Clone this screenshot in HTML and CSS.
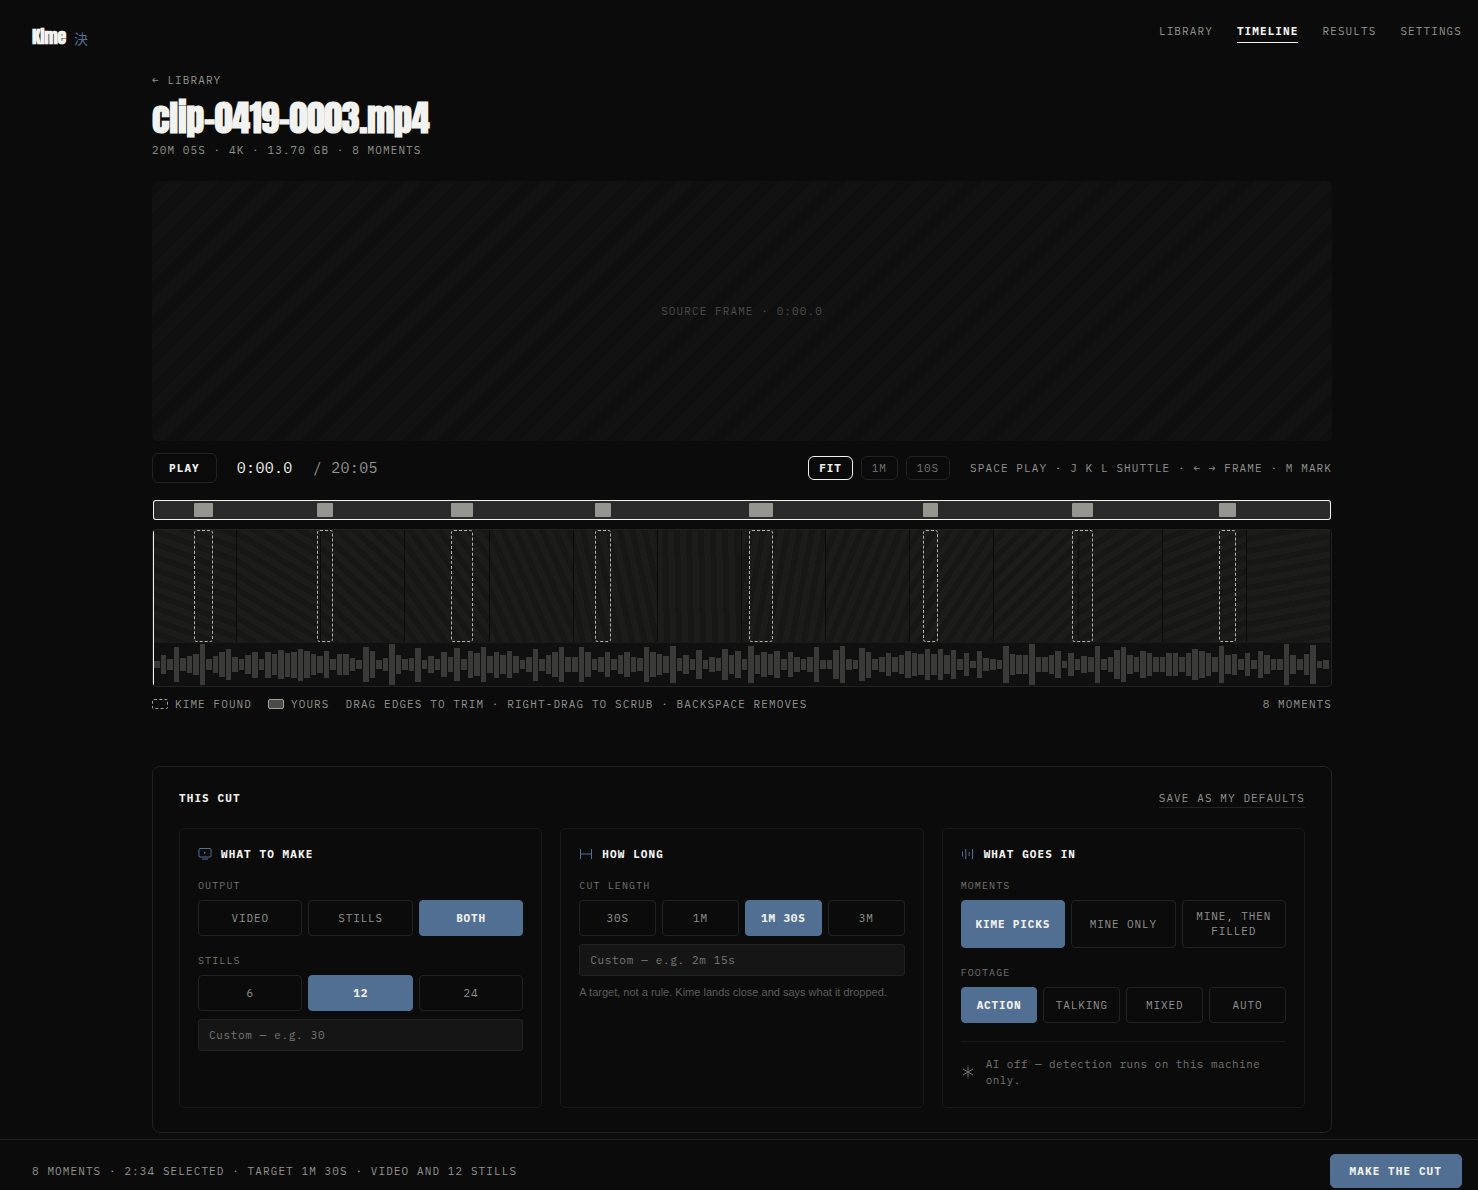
FILE: index.html
```html
<!DOCTYPE html>
<html lang="en">
    <head>
        <meta charset="utf-8" />
        <meta name="viewport" content="width=device-width, initial-scale=1" />
        <title>Kime - Timeline</title>
        <link rel="stylesheet" href="styles.css">
        <script src="timeline.js" defer></script>
    </head>

    <body>
        <header class="topbar">
            <a class="brand" href="#">Kime <span class="brand-mark" lang="ja">決</span></a>
            <nav>
                <a href="#">Library</a>
                <a href="#" class="current" aria-current="page">Timeline</a>
                <a href="#">Results</a>
                <a href="#">Settings</a>
            </nav>
        </header>

        <main>
            <a class="back" href="#">← Library</a>
            <h1>clip-0419-0003.mp4</h1>
            <p class="meta">20m 05s · 4K · 13.70 GB · 8 moments</p>

            <div class="frame">Source frame · 0:00.0</div>

            <div class="transport">
                <button class="play">Play</button>
                <span class="time">0:00.0</span>
                <span class="duration">/ 20:05</span>
                <div class="zoom">
                    <button aria-pressed="true">Fit</button>
                    <button aria-pressed="false">1m</button>
                    <button aria-pressed="false">10s</button>
                </div>
                <span class="keys">Space play · J K L shuttle · ← → frame · M mark</span>
            </div>

            <div class="overview" id="overview"></div>

            <div class="timeline">
                <div class="film" id="film"></div>
                <div class="wave" id="wave"></div>
                <div class="playhead"></div>
            </div>

            <div class="legend">
                <span class="key"><i class="swatch found"></i>Kime found</span>
                <span class="key"><i class="swatch yours"></i>Yours</span>
                <span>Drag edges to trim · Right-drag to scrub · Backspace removes</span>
                <span class="count">8 moments</span>
            </div>

            <section class="panel">
                <div class="panel-head">
                    <h2>This cut</h2>
                    <button class="save">Save as my defaults</button>
                </div>

                <div class="cards">
                    <div class="card">
                        <h3>
                            <svg class="icon" viewBox="0 0 14 14"><rect x="1" y="1.5" width="12" height="8.5" rx="1" /><path d="M4 12h6" /><path d="M6 4.5v2.4l2-1.2z" class="solid" /></svg>
                            What to make
                        </h3>
                        <div class="label" id="output">Output</div>
                        <div class="options" role="group" aria-labelledby="output">
                            <button aria-pressed="false">Video</button>
                            <button aria-pressed="false">Stills</button>
                            <button aria-pressed="true">Both</button>
                        </div>
                        <label class="label" for="stills">Stills</label>
                        <div class="options">
                            <button aria-pressed="false">6</button>
                            <button aria-pressed="true">12</button>
                            <button aria-pressed="false">24</button>
                        </div>
                        <input type="text" id="stills" placeholder="Custom — e.g. 30" />
                    </div>

                    <div class="card">
                        <h3>
                            <svg class="icon" viewBox="0 0 14 14"><path d="M1.5 2v10M12.5 2v10M1.5 7h11" /></svg>
                            How long
                        </h3>
                        <label class="label" for="length">Cut length</label>
                        <div class="options">
                            <button aria-pressed="false">30s</button>
                            <button aria-pressed="false">1m</button>
                            <button aria-pressed="true">1m 30s</button>
                            <button aria-pressed="false">3m</button>
                        </div>
                        <input type="text" id="length" placeholder="Custom — e.g. 2m 15s" />
                        <p class="hint">A target, not a rule. Kime lands close and says what it dropped.</p>
                    </div>

                    <div class="card">
                        <h3>
                            <svg class="icon" viewBox="0 0 14 14"><path d="M1.5 4.5v5M4.8 2v10M8.2 5v4M11.5 2v10" /></svg>
                            What goes in
                        </h3>
                        <div class="label" id="moments">Moments</div>
                        <div class="options" role="group" aria-labelledby="moments">
                            <button aria-pressed="true">Kime picks</button>
                            <button aria-pressed="false">Mine only</button>
                            <button aria-pressed="false">Mine, then filled</button>
                        </div>
                        <div class="label" id="footage">Footage</div>
                        <div class="options" role="group" aria-labelledby="footage">
                            <button aria-pressed="true">Action</button>
                            <button aria-pressed="false">Talking</button>
                            <button aria-pressed="false">Mixed</button>
                            <button aria-pressed="false">Auto</button>
                        </div>
                        <div class="ai">
                            <svg class="icon" viewBox="0 0 14 14"><path d="M7 1.5v11M2 4l10 6M12 4l-10 6" /></svg>
                            <p>AI off — detection runs on this machine only.</p>
                        </div>
                    </div>
                </div>
            </section>
        </main>

        <footer class="cutbar">
            <span>8 moments · 2:34 selected · Target 1m 30s · Video and 12 stills</span>
            <button class="make">Make the cut</button>
        </footer>
    </body>
</html>
```
FILE: styles.css
```css
* {
    box-sizing: border-box;
}

:root {
    --bg: #0b0b0b;
    --line: #222222;
    --line-soft: #191919;
    --text: #f2f2ef;
    --muted: #92928e;
    --dim: #727270;
    --accent: #516f92;
    --mono: 'IBM Plex Mono', 'Liberation Mono', monospace;
    --display: 'Anton', 'Liberation Sans Narrow', 'Liberation Sans', sans-serif;
}

body {
    display: flex;
    flex-direction: column;
    min-height: 100vh;
    margin: 0;
    background: var(--bg);
    color: var(--muted);
    font: 11px/16px var(--mono);
    letter-spacing: 0.1em;
    text-transform: uppercase;
}

h1,
h2,
h3,
p {
    margin: 0;
}

a {
    color: inherit;
    text-decoration: none;
}

button {
    padding: 0;
    border: 1px solid var(--line);
    background: none;
    color: var(--muted);
    font: inherit;
    letter-spacing: inherit;
    text-transform: inherit;
    cursor: pointer;
}

.topbar {
    display: flex;
    align-items: flex-start;
    justify-content: space-between;
    height: 52px;
    padding: 23px 16px 0 32px;
}

.brand {
    display: flex;
    align-items: baseline;
    gap: 8px;
    color: var(--text);
    font: bold 18px/28px var(--display);
    letter-spacing: -0.02em;
    text-transform: none;
}

.brand-mark {
    color: var(--accent);
    font: 14px/28px 'Noto Sans CJK JP', sans-serif;
}

nav {
    display: flex;
    gap: 24px;
}

nav a {
    padding-bottom: 3px;
    border-bottom: 1px solid transparent;
}

nav .current {
    border-color: var(--text);
    color: var(--text);
    font-weight: bold;
}

main {
    align-self: center;
    width: 100%;
    max-width: 1218px;
    padding: 20px 16px 6px 22px;
}

.back {
    display: block;
}

h1 {
    margin: 8px 0 2px;
    color: var(--text);
    font: bold 36px/44px var(--display);
    letter-spacing: -0.01em;
    text-transform: none;
}

.frame {
    display: flex;
    align-items: center;
    justify-content: center;
    height: 260px;
    margin-top: 23px;
    border-radius: 6px;
    background: repeating-linear-gradient(135deg, #0f0f0f 0 12px, #121212 12px 24px);
    color: #4c4c4a;
}

.transport {
    display: flex;
    align-items: center;
    margin: 12px 0 17px;
}

.play {
    height: 30px;
    padding: 0 16px;
    border-radius: 6px;
    color: var(--text);
    font-weight: bold;
}

.time,
.duration {
    margin-left: 20px;
    font-size: 15px;
    letter-spacing: 0.02em;
}

.time {
    color: var(--text);
}

.zoom {
    display: flex;
    gap: 8px;
    margin: 0 20px 0 auto;
}

.zoom button {
    height: 24px;
    padding: 0 10px;
    border-radius: 6px;
    color: var(--dim);
    letter-spacing: 0.08em;
}

.zoom button[aria-pressed='true'] {
    border-color: var(--text);
    color: var(--text);
    font-weight: bold;
}

.overview {
    position: relative;
    height: 20px;
    margin: 0 1px 9px;
    border-radius: 3px;
    background: #2a2a2a;
    box-shadow: inset 0 0 0 1px var(--text);
}

.overview .moment {
    position: absolute;
    top: 3px;
    bottom: 3px;
    border-radius: 1px;
    background: #969690;
}

.timeline {
    position: relative;
    border: 1px solid var(--line);
    border-radius: 4px;
    background: #101010;
    overflow: hidden;
}

.film {
    position: relative;
    display: flex;
    height: 113px;
    border-bottom: 1px solid var(--line-soft);
}

.film .tile {
    flex: 1;
    border-right: 1px solid #0b0b0b;
}

.film .moment {
    position: absolute;
    top: 0;
    bottom: 0;
    border: 1px dashed #b4b4ae;
    border-radius: 3px;
}

.wave {
    display: flex;
    align-items: center;
    height: 43px;
    padding-left: 1px;
}

.wave i {
    flex: 1;
    margin-right: 1px;
    background: #3a3a38;
}

.playhead {
    position: absolute;
    top: 0;
    bottom: 0;
    left: 0;
    width: 1px;
    background: var(--text);
}

.legend {
    display: flex;
    gap: 16px;
    margin-top: 9px;
}

.legend .key {
    display: flex;
    align-items: center;
    gap: 7px;
}

.legend .count {
    margin-left: auto;
}

.swatch {
    width: 16px;
    height: 10px;
    border: 1px dashed #a0a09a;
    border-radius: 2px;
}

.swatch.yours {
    border-style: solid;
    background: #4a4a48;
}

.panel {
    margin-top: 54px;
    padding: 23px 26px 24px;
    border: 1px solid var(--line);
    border-radius: 8px;
}

.panel-head {
    display: flex;
    align-items: flex-start;
    justify-content: space-between;
    margin-bottom: 20px;
}

h2,
h3 {
    color: var(--text);
    font-size: 11px;
    line-height: 16px;
}

.save {
    padding-bottom: 1px;
    border-width: 0 0 1px;
}

.cards {
    display: grid;
    grid-template-columns: repeat(3, 1fr);
    gap: 18px;
}

.card {
    padding: 17px 18px 19px;
    border: 1px solid var(--line-soft);
    border-radius: 5px;
}

h3 {
    display: flex;
    align-items: center;
    gap: 9px;
    margin-bottom: 17px;
}

.icon {
    flex: none;
    width: 14px;
    height: 14px;
    fill: none;
    stroke: var(--accent);
    stroke-width: 1;
}

.icon .solid {
    fill: var(--accent);
    stroke: none;
}

.label {
    display: block;
    color: var(--dim);
    font-size: 10px;
    line-height: 14px;
}

.options + .label {
    margin-top: 18px;
}

.options {
    display: grid;
    grid-auto-flow: column;
    grid-auto-columns: minmax(0, 1fr);
    gap: 6px;
    margin-top: 7px;
}

.options button {
    min-height: 36px;
    padding: 8px 10px;
    border-radius: 4px;
    line-height: 15px;
    letter-spacing: 0.08em;
}

.options button[aria-pressed='true'] {
    border-color: var(--accent);
    background: var(--accent);
    color: var(--text);
    font-weight: bold;
}

input {
    width: 100%;
    height: 32px;
    margin-top: 8px;
    padding: 0 10px;
    border: 1px solid var(--line);
    border-radius: 3px;
    background: #151515;
    color: var(--text);
    font: inherit;
    letter-spacing: 0.06em;
}

input::placeholder {
    color: #787876;
}

.hint {
    margin-top: 8px;
    color: #5c5c5a;
    font-family: 'Liberation Sans', sans-serif;
    letter-spacing: 0;
    text-transform: none;
}

.ai {
    display: flex;
    align-items: center;
    gap: 11px;
    margin-top: 18px;
    padding-top: 14px;
    border-top: 1px solid var(--line-soft);
    color: var(--dim);
    letter-spacing: 0.04em;
    text-transform: none;
}

.ai .icon {
    stroke: var(--dim);
}

.cutbar {
    position: sticky;
    bottom: 0;
    display: flex;
    align-items: center;
    justify-content: space-between;
    margin-top: auto;
    padding: 14px 16px 2px 32px;
    border-top: 1px solid var(--line);
    background: var(--bg);
}

.make {
    height: 34px;
    padding: 0 19px;
    border-color: var(--accent);
    border-radius: 5px;
    background: var(--accent);
    color: var(--text);
    font-weight: bold;
}
```
FILE: timeline.js
```js
const duration = 1205;
const tileCount = 14;

// [start, length] in seconds.
const moments = [
    [42, 19],
    [168, 16],
    [305, 22],
    [452, 17],
    [610, 24],
    [788, 15],
    [940, 22],
    [1090, 18],
];

// Peak height of each audio bar, in pixels.
const peaks = [
    7, 19, 11, 35, 13, 17, 21, 41, 11, 17, 25, 31, 15, 11, 19, 26, 11, 26, 21, 29,
    24, 26, 32, 27, 21, 17, 27, 11, 21, 21, 13, 9, 35, 27, 9, 13, 41, 19, 11, 13,
    34, 9, 17, 11, 25, 15, 33, 11, 27, 23, 35, 17, 26, 19, 27, 17, 9, 15, 32, 12,
    19, 25, 35, 15, 15, 35, 25, 11, 15, 25, 11, 19, 25, 15, 13, 35, 25, 21, 17, 37,
    13, 19, 11, 29, 9, 15, 13, 31, 19, 27, 11, 37, 19, 25, 21, 27, 11, 25, 15, 11,
    15, 35, 9, 9, 29, 37, 11, 9, 33, 26, 11, 15, 23, 15, 19, 27, 23, 21, 31, 21,
    31, 19, 29, 11, 23, 7, 27, 13, 11, 9, 37, 21, 19, 19, 41, 15, 15, 19, 27, 7,
    23, 11, 17, 15, 37, 11, 15, 29, 35, 19, 15, 27, 23, 15, 15, 23, 23, 15, 23, 31,
    27, 23, 15, 37, 19, 21, 11, 23, 9, 27, 19, 11, 11, 41, 19, 11, 21, 39, 7, 9,
];

const overview = document.getElementById('overview');
const film = document.getElementById('film');
const wave = document.getElementById('wave');

const add = (parent, tag, className) => {
    const element = document.createElement(tag);
    element.className = className;
    parent.appendChild(element);
    return element;
};

for (let i = 0; i < tileCount; i++) {
    const angle = 20 + i * 11.5;
    add(film, 'div', 'tile').style.background = `repeating-linear-gradient(${angle}deg, #1c1c1a 0 6px, #171715 6px 12px)`;
}

moments.forEach(([start, length]) => {
    [overview, film].forEach((track) => {
        const box = add(track, 'div', 'moment');
        box.style.left = (start / duration) * 100 + '%';
        box.style.width = (length / duration) * 100 + '%';
    });
});

peaks.forEach((peak) => {
    add(wave, 'i', 'bar').style.height = peak + 'px';
});
```
